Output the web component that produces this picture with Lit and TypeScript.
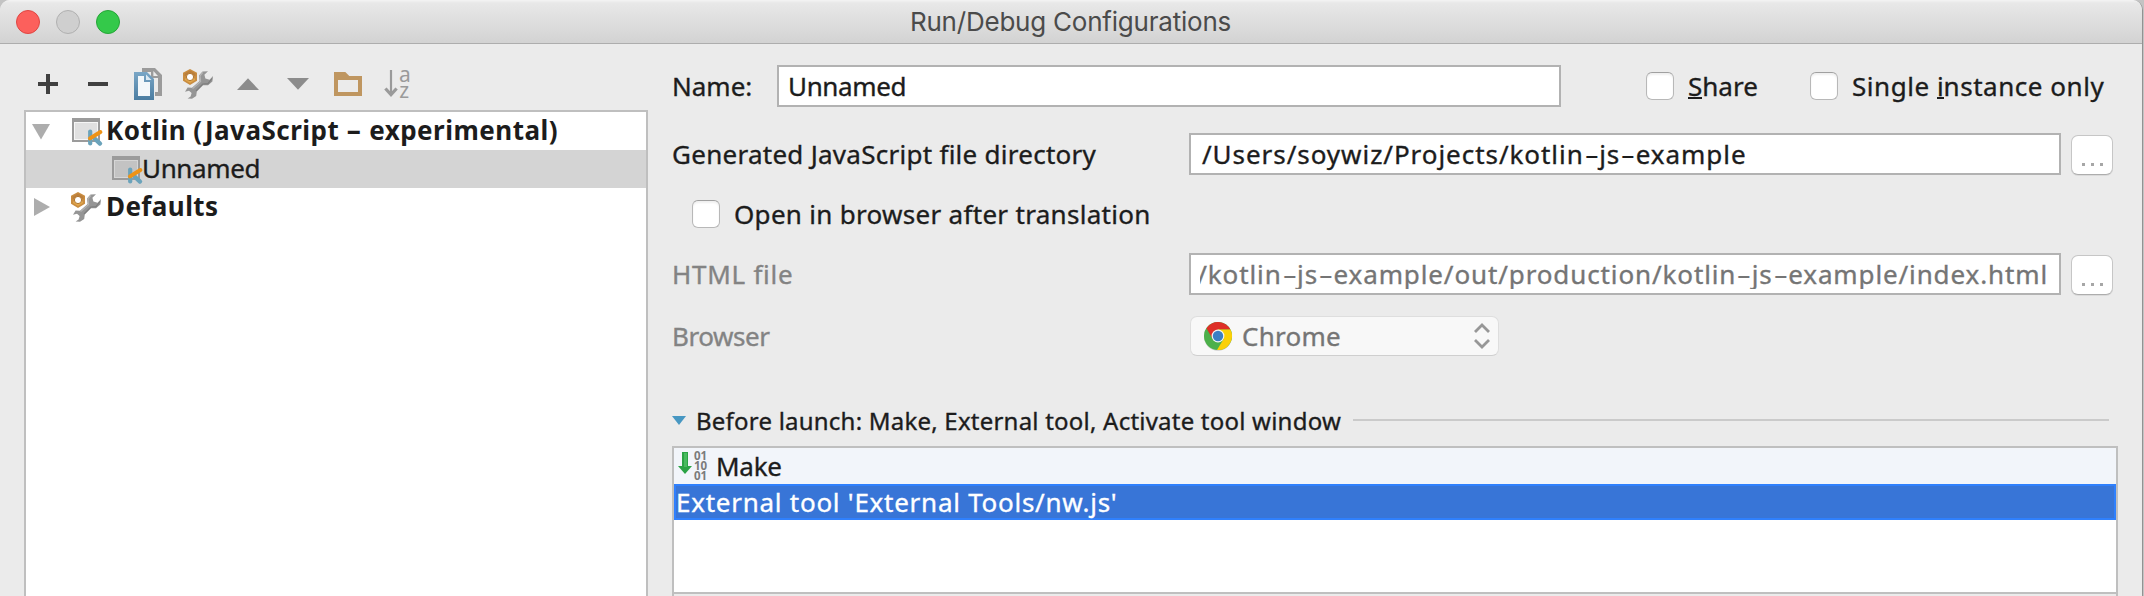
import { LitElement, html, css, svg } from "lit";

const wrench = svg`
  <path d="M8 1 L15 4.8 V12.8 L8 17 L1 12.8 V4.8 Z" fill="#c98d41"/>
  <path d="M8 2.6 L13.4 5.6 V8 H2.6 V5.6 Z" fill="#b5793a" opacity=".7"/>
  <path d="M3 10.5 L13 10.5 V12 L8 15 L3 12 Z" fill="#e3a84c"/>
  <circle cx="8" cy="9" r="3.6" fill="#fff" stroke="#b0762f" stroke-width="1"/>
  <path d="M26 3.2 L20.5 3.4 L17 7.5 L17.6 13 L10 19.8 L5.6 19.4 L3 23.8 L7 22.8 L9.6 25 L8.6 28.6 L5.6 30.4 L10 30.8 L14.2 28 L14.8 23.4 L21 17.2 L26 17.2 L30.4 13.6 L31 8 L27.6 11.8 L23.4 10.6 L22.4 6.8 Z"
    fill="#959595"/>
  <path d="M20.8 4.4 L18 7.8 L18.6 13.4 L10.6 20.6" fill="none" stroke="#b4b4b4" stroke-width="1.2"/>
  <path d="M30 10.5 L26 15.6 L20.8 16 L14 22.8" fill="none" stroke="#7d7d7d" stroke-width="1.2"/>`;

const icons: Record<string, unknown> = {
  add: svg`<path d="M6 16H26M16 6V26" stroke="#404040" stroke-width="4"/>`,
  remove: svg`<path d="M6 16H26" stroke="#404040" stroke-width="4"/>`,
  copy: svg`
    <defs><linearGradient id="blue" x1="0" y1="0" x2="0" y2="1">
      <stop offset="0" stop-color="#7aa6c6"/><stop offset="1" stop-color="#4a7ca1"/></linearGradient></defs>
    <path d="M10 0H23L30 7V28H23V24H26V10H19V4H10Z" fill="#9b9b9b"/>
    <path d="M21.4 3V8H26Z" fill="#ebebeb"/>
    <path d="M2 4H15L22 11V32H2Z" fill="url(#blue)"/>
    <path d="M6 8H12V14H18V28H6Z" fill="#f3f7fa"/>
    <path d="M14 6.5L19.5 12H14Z" fill="#dce9f2"/>`,
  wrench,
  up: svg`<path d="M5 22L16 10.3L27 22Z" fill="#8c8c8c"/>`,
  down: svg`<path d="M5 10H27L16 21.7Z" fill="#8c8c8c"/>`,
  folder: svg`<path fill-rule="evenodd" d="M2 4H13.3L17.3 8H30V28H2Z M6 12V24H26V12Z" fill="#bf9660"/>`,
  sort: svg`
    <path d="M9 2V27" stroke="#9a9a9a" stroke-width="2.2"/>
    <path d="M3.4 20.5L9 26.6L14.6 20.5" fill="none" stroke="#9a9a9a" stroke-width="3.2"/>
    <text x="17" y="14" class="az">a</text><text x="17.3" y="29.6" class="az">z</text>`,
};

const kotlin = (dim: boolean) => svg`
  <rect x="2" y="2" width="28" height="24" fill="#9b9b9b"/>
  <rect x="4" y="6" width="24" height="18" fill=${dim ? "#d6d6d6" : "#f6f6f6"}/>
  <rect x="5" y="7" width="22" height="16" fill=${dim ? "#c3c3c3" : "#e0e0e0"}/>
  <g fill="none" stroke-linecap="round">
    <path d="M20.2 15.6V27.4" stroke="#6ba3bb" stroke-width="4.2"/>
    <path d="M24 22L30 27.6" stroke="#6ba3bb" stroke-width="4.4"/>
    <path d="M20 22.4L30.4 16" stroke="#ee9316" stroke-width="4"/>
  </g>`;

const dashed = (text: string) =>
  text.split(/(-)/).map((p) => (p === "-" ? html`<span class="dash">-</span>` : p));

class AppRoot extends LitElement {
  static styles = css`
    :host {
      display: block;
      width: 2144px;
      height: 596px;
      overflow: hidden;
      background: #c3c3c3;
      font: 26px/30px "Noto Sans", sans-serif;
      color: #1c1c1c;
      white-space: nowrap;
      -webkit-text-stroke: 0.35px currentColor;
    }
    * { box-sizing: border-box; }
    svg { display: block; flex: none; }
    svg text { -webkit-text-stroke: 0; }
    .window {
      width: 2143px;
      height: 596px;
      border-right: 1px solid #929292;
      border-radius: 10px 10px 0 0;
      background: #ebebeb;
      overflow: hidden;
    }
    .titlebar {
      height: 44px;
      display: grid;
      grid-template-columns: 320px 1fr 320px;
      align-items: center;
      background: linear-gradient(#f4f4f4, #e8e8e8 3px, #d3d3d3 42px);
      border-bottom: 1px solid #adadad;
    }
    .lights { display: flex; gap: 16px; padding-left: 16px; }
    .light { width: 24px; height: 24px; border-radius: 50%; border: 1px solid; }
    .close { background: #fc605c; border-color: #df4642; }
    .min { background: #cfcfcf; border-color: #b0b0b0; }
    .max { background: #34c94a; border-color: #25a537; }
    .title {
      font: 26px/30px Inter, sans-serif;
      color: #4b4b4b;
      letter-spacing: -0.22px;
      text-align: center;
      padding-top: 1px;
      padding-right: 1px;
      -webkit-text-stroke: 0;
    }
    .body { display: flex; height: 552px; }
    .left { width: 648px; padding-left: 24px; display: flex; flex-direction: column; }
    .toolbar { height: 66px; padding: 24px 0 0 8px; display: flex; gap: 18px; }
    .az { font: 21px "Noto Sans", sans-serif; fill: #9a9a9a; }
    .tree { flex: 1; background: #fff; border: 2px solid #bfbfbf; border-bottom: 0; }
    .node { height: 38px; display: flex; align-items: center; }
    .label { padding: 0 0 3px 1px; }
    .twisty { margin-left: 4px; margin-right: 18px; }
    .selected { background: #d4d4d4; padding-left: 84px; }
    .bold { font-weight: 700; -webkit-text-stroke: 0; }
    .kt { letter-spacing: 0.48px; }
    .df { letter-spacing: 0.41px; }
    .un { letter-spacing: -0.35px; }
    .dash {
      display: inline-block;
      width: 15.5px;
      text-align: center;
      transform: scaleX(1.75);
      letter-spacing: 0;
      -webkit-text-stroke: 0;
    }
    .form { flex: 1; padding-left: 24px; }
    .row { display: flex; align-items: center; height: 42px; }
    .r1 { margin-top: 21px; }
    .r2 { margin-top: 26px; }
    .r3 { margin-top: 25px; height: 28px; padding-left: 20px; }
    .r4 { margin-top: 25px; }
    .r5 { margin-top: 21px; height: 40px; }
    .name { width: 105px; }
    .caption { width: 517px; }
    .off { color: #838383; width: 517px; }
    .gen { letter-spacing: 0.27px; }
    .htm { letter-spacing: 0.74px; }
    .brw { letter-spacing: -0.45px; }
    .field {
      height: 42px;
      background: #fff;
      border: 2px solid #b2b2b2;
      display: flex;
      align-items: center;
    }
    .namefield { width: 784px; padding-left: 9px; margin-right: 85px; }
    .pathfield { width: 872px; padding: 0 11px 0 11px; letter-spacing: 0.95px; }
    .clip { flex: 1; display: flex; justify-content: flex-end; overflow: hidden; color: #757575; }
    .tail { padding-left: 9px; padding-right: 11px; letter-spacing: 0.88px; }
    .check {
      width: 28px;
      height: 28px;
      flex: none;
      background: #fff;
      border: 1px solid #b8b8b8;
      border-top-color: #a0a0a0;
      border-radius: 6px;
      box-shadow: inset 0 2px 2px #f0f0f0;
    }
    .share { margin-left: 14px; width: 122px; }
    .single { margin-left: 14px; letter-spacing: 0.53px; }
    .key { border-bottom: 2px solid #1c1c1c; display: inline-block; height: 28px; letter-spacing: 0; }
    .open { margin-left: 14px; letter-spacing: 0.3px; }
    .more {
      width: 42px;
      height: 40px;
      margin: 2px 0 0 10px;
      display: flex;
      justify-content: center;
      gap: 6px;
      padding-top: 27px;
      background: #fff;
      border: 1px solid #c6c6c6;
      border-bottom-color: #adadad;
      border-radius: 7px;
      box-shadow: 0 1px 0 #dadada;
    }
    .more i { width: 3px; height: 3px; background: #a6a6a6; }
    .select {
      width: 309px;
      height: 40px;
      margin-left: 1px;
      padding: 0 7px 0 12px;
      display: flex;
      align-items: center;
      background: #f8f8f8;
      border: 1px solid #dedede;
      border-bottom-color: #cfcfcf;
      border-radius: 7px;
      color: #757575;
    }
    .chrome { flex: 1; padding-left: 9px; letter-spacing: 0.25px; }
    .section { margin-top: 50px; height: 30px; display: flex; align-items: center; }
    .section span { font-size: 24px; padding-left: 10px; letter-spacing: 0.22px; width: 662px; }
    .rule { width: 756px; height: 2px; margin: 0 0 2px 5px; background: #cacaca; }
    .list { width: 1446px; margin-top: 10px; border: 2px solid #bfbfbf; border-bottom: 0; background: #fff; }
    .item { height: 36px; display: flex; align-items: center; }
    .make { background: #f2f5fa; padding-left: 4px; }
    .make span { padding-left: 8px; letter-spacing: -0.25px; }
    .ext { background: #3875d7; border: 2px solid #2f80fd; color: #fff; letter-spacing: 0.74px; }
    .blank { height: 72px; }
    .foot { height: 4px; background: #ebebeb; border-top: 2px solid #bfbfbf; }
    .bits { font: 700 11.5px "Noto Sans", sans-serif; fill: #7b7b7b; }
  `;

  icon(name: string) {
    return html`<svg width="32" height="32" viewBox="0 0 32 32" overflow="visible">${icons[name]}</svg>`;
  }

  more() {
    return html`<div class="more"><i></i><i></i><i></i></div>`;
  }

  render() {
    return html`
      <div class="window">
        <div class="titlebar">
          <div class="lights">
            <div class="light close"></div><div class="light min"></div><div class="light max"></div>
          </div>
          <div class="title">Run/Debug Configurations</div>
        </div>
        <div class="body">
          <div class="left">
            <div class="toolbar">${Object.keys(icons).map((n) => this.icon(n))}</div>
            <div class="tree">
              <div class="node">
                <svg class="twisty" width="22" height="22" viewBox="0 0 22 22"><path d="M2 4H20L11 19.6Z" fill="#adadad"/></svg>
                <svg width="35" height="32" viewBox="0 -1 35 32">${kotlin(false)}</svg>
                <span class="label bold kt">${dashed("Kotlin (JavaScript - experimental)")}</span>
              </div>
              <div class="node selected">
                <svg width="31" height="32" viewBox="0 -1 31 32" overflow="visible">${kotlin(true)}</svg>
                <span class="label un">Unnamed</span>
              </div>
              <div class="node">
                <svg class="twisty" width="22" height="22" viewBox="0 0 22 22"><path d="M4 2V20L20 11Z" fill="#adadad"/></svg>
                <svg width="35" height="32" viewBox="0 0 35 32">${wrench}</svg>
                <span class="label bold df">Defaults</span>
              </div>
            </div>
          </div>
          <div class="form">
            <div class="row r1">
              <span class="name">Name:</span>
              <div class="field namefield"><span class="un">Unnamed</span></div>
              <div class="check"></div>
              <span class="share"><span class="key">S</span>hare</span>
              <div class="check"></div>
              <span class="single">Single <span class="key">i</span>nstance only</span>
            </div>
            <div class="row r2">
              <span class="caption gen">Generated JavaScript file directory</span>
              <div class="field pathfield"><span>${dashed("/Users/soywiz/Projects/kotlin-js-example")}</span></div>
              ${this.more()}
            </div>
            <div class="row r3">
              <div class="check"></div>
              <span class="open">Open in browser after translation</span>
            </div>
            <div class="row r4">
              <span class="off htm">HTML file</span>
              <div class="field pathfield tail">
                <div class="clip"><span>${dashed("/kotlin-js-example/out/production/kotlin-js-example/index.html")}</span></div>
              </div>
              ${this.more()}
            </div>
            <div class="row r5">
              <span class="off brw">Browser</span>
              <div class="select">
                <svg width="30" height="30" viewBox="0 0 30 30">
                  <circle cx="15" cy="15.8" r="14" fill="#000" opacity=".18"/>
                  <circle cx="15" cy="15" r="14" fill="#4cb04a"/>
                  <path d="M3.4 7.2 A14 14 0 0 1 27.4 8.6 H15 L9.4 17.6 Z" fill="#de2f27"/>
                  <path d="M15 8.6 H27.4 A14 14 0 0 1 14 29 L20.6 18 Z" fill="#fbd007"/>
                  <circle cx="15" cy="15" r="6.4" fill="#f4f4f4"/>
                  <circle cx="15" cy="15" r="5.2" fill="#3a7fc4"/>
                </svg>
                <span class="chrome">Chrome</span>
                <svg width="18" height="28" viewBox="0 0 18 28">
                  <path d="M2 10L9 3L16 10M2 18L9 25L16 18" fill="none" stroke="#979797" stroke-width="2.8"/>
                </svg>
              </div>
            </div>
            <div class="section">
              <svg width="14" height="30" viewBox="0 0 14 30"><path d="M0 10H14L7 19Z" fill="#4797c2"/></svg>
              <span>Before launch: Make, External tool, Activate tool window</span>
              <div class="rule"></div>
            </div>
            <div class="list">
              <div class="item make">
                <svg width="30" height="32" viewBox="0 0 30 32">
                  <path d="M4 2H10V16H14L7 24L0 16H4Z" fill="#2ba345"/>
                  <path d="M6 3H9V17H6Z" fill="#48bb5f"/>
                  <text x="16" y="10.4" class="bits" textLength="13">01</text>
                  <text x="16" y="20.4" class="bits" textLength="13">10</text>
                  <text x="16" y="30.4" class="bits" textLength="13">01</text>
                </svg>
                <span>Make</span>
              </div>
              <div class="item ext"><span>External tool 'External Tools/nw.js'</span></div>
              <div class="blank"></div>
              <div class="foot"></div>
            </div>
          </div>
        </div>
      </div>
    `;
  }
}
customElements.define("app-root", AppRoot);
